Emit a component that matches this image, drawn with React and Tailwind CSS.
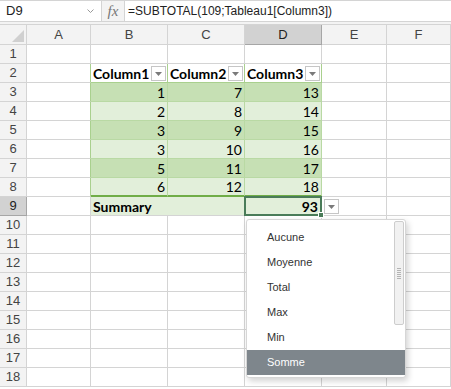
import React from "react";

const data = [
	[1, 7, 13],
	[2, 8, 14],
	[3, 9, 15],
	[3, 10, 16],
	[5, 11, 17],
	[6, 12, 18],
];

const menuItems = ["Aucune", "Moyenne", "Total", "Max", "Min", "Somme"];

const cellFont = "font-['Lato',sans-serif] text-[14px] text-black";
const uiFont = "font-['Liberation_Sans',Arial,sans-serif]";

const FilterButton = ({ className }) => (
	<div
		className={`absolute w-[15px] h-[15px] bg-white border border-[#c6c6c6] flex items-center justify-center ${className}`}
	>
		<svg width="7" height="4" viewBox="0 0 7 4">
			<path d="M0 0 H7 L3.5 4 Z" fill="#7a7a7a" />
		</svg>
	</div>
);

const RowHeader = ({ n }) => (
	<div
		className={`w-[27px] shrink-0 flex items-center justify-center border-r border-b text-[13px] ${uiFont} ${
			n === 9
				? "bg-[#d2d2d2] border-[#a6a6a6] text-[#222]"
				: "bg-[#f3f3f3] border-[#d4d4d4] text-[#444]"
		}`}
	>
		{n}
	</div>
);

const Plain = ({ w, green }) => (
	<div
		className={`${w} shrink-0 border-b border-[#d4d4d4] border-r ${
			green ? "border-r-[#a9d08e]" : ""
		}`}
	/>
);

const EmptyRow = ({ n }) => (
	<div className="flex h-[19px]">
		<RowHeader n={n} />
		<Plain w="w-[64px]" />
		<Plain w="w-[77px]" />
		<Plain w="w-[77px]" />
		<Plain w="w-[77px]" />
		<Plain w="w-[65px]" />
		<Plain w="w-[64px]" />
	</div>
);

const HeaderRow = () => (
	<div className="flex h-[19px]">
		<RowHeader n={2} />
		<Plain w="w-[64px]" green />
		{["Column1", "Column2", "Column3"].map((c) => (
			<div
				key={c}
				className={`relative w-[77px] shrink-0 border-r border-b border-[#a9d08e] bg-white flex items-end pl-[2px] font-bold ${cellFont} leading-[17px]`}
			>
				{c}
				<FilterButton className="right-[1px] top-[2px]" />
			</div>
		))}
		<Plain w="w-[65px]" />
		<Plain w="w-[64px]" />
	</div>
);

const DataRow = ({ n, values }) => {
	const dark = n % 2 === 1;
	const last = n === 8;
	return (
		<div className="flex h-[19px]">
			<RowHeader n={n} />
			<Plain w="w-[64px]" green />
			{values.map((v, i) => (
				<div
					key={i}
					className={`w-[77px] shrink-0 border-r border-b flex items-end justify-end pr-[2px] ${cellFont} leading-[17px] ${
						dark ? "bg-[#c6e0b4]" : "bg-[#e2efda]"
					} ${
						last
							? "border-r-[#b9d9a4] border-b-2 border-b-[#70ad47]"
							: "border-[#b9d9a4]"
					}`}
				>
					{v}
				</div>
			))}
			<div className="w-[65px] shrink-0 border-b border-r border-[#d4d4d4]" />
			<Plain w="w-[64px]" />
		</div>
	);
};

const SummaryRow = () => (
	<div className="flex h-[19px]">
		<RowHeader n={9} />
		<Plain w="w-[64px]" />
		<div
			className={`w-[77px] shrink-0 border-b border-[#d4d4d4] bg-[#e2efda] flex items-end pl-[2px] font-bold ${cellFont} leading-[17px]`}
		>
			Summary
		</div>
		<div className="w-[77px] shrink-0 border-b border-[#d4d4d4] bg-[#e2efda]" />
		<div
			className={`relative w-[77px] shrink-0 border-b border-r border-[#d4d4d4] bg-[#e2efda] flex items-end justify-end pr-[3px] font-bold ${cellFont} leading-[17px]`}
		>
			93
			<div className="absolute -left-[1px] -top-[1px] -right-[1px] -bottom-[1px] border-2 border-[#4a7c59]" />
			<div className="absolute -right-[3px] -bottom-[3px] w-[6px] h-[6px] bg-[#4a7c59] border border-white" />
			<FilterButton className="left-[79px] top-[2px]" />
		</div>
		<Plain w="w-[65px]" />
		<Plain w="w-[64px]" />
	</div>
);

const Menu = () => (
	<div className="absolute left-[246px] top-[219px] w-[160px] h-[159px] bg-white border border-[#d6d6d6] rounded-[3px] shadow-[2px_3px_6px_rgba(0,0,0,0.18)] pt-[5px]">
		{menuItems.map((m) => (
			<div
				key={m}
				className={`h-[25px] flex items-center pl-[20px] text-[11px] ${uiFont} ${
					m === "Somme" ? "bg-[#7e868c] text-white" : "text-[#333]"
				}`}
			>
				{m}
			</div>
		))}
		<div className="absolute right-[1px] top-[1px] w-[10px] h-[104px] bg-[#f1f1f1] border border-[#cdcdcd] rounded-[2px] flex flex-col items-center justify-center gap-[1px]">
			{[0, 1, 2, 3, 4, 5].map((i) => (
				<div key={i} className="w-[4px] h-[1px] bg-[#b4b4b4]" />
			))}
		</div>
	</div>
);

export default function App() {
	return (
		<div className="relative w-[451px] h-[389px] overflow-hidden bg-white">
			<div className={`flex h-[22px] border-y border-[#d4d4d4] ${uiFont}`}>
				<div className="w-[102px] shrink-0 border-r border-[#d4d4d4] flex items-center justify-between pl-[6px] pr-[7px] text-[#222] text-[13px]">
					<span>D9</span>
					<svg width="7" height="4" viewBox="0 0 7 4">
						<path d="M0.5 0.5 L3.5 3.5 L6.5 0.5" fill="none" stroke="#999" strokeWidth="1" />
					</svg>
				</div>
				<div className="w-[23px] shrink-0 border-r border-[#d4d4d4] bg-[#f3f3f3] flex items-center justify-center font-['Liberation_Serif',serif] italic text-[15px] text-[#777]">
					fx
				</div>
				<div className="pl-[3px] flex items-center text-[12px] text-[#222]">
					=SUBTOTAL(109;Tableau1[Column3])
				</div>
			</div>
			<div className="h-[3px] bg-[#f3f3f3] border-b border-[#d4d4d4]" />
			<div className={`flex h-[20px] text-[13px] text-[#444] ${uiFont}`}>
				<div className="relative w-[27px] shrink-0 bg-[#f3f3f3] border-r border-b border-[#d4d4d4]">
					<svg className="absolute right-[2px] bottom-[2px]" width="12" height="12" viewBox="0 0 12 12">
						<path d="M12 0 V12 H0 Z" fill="#d0d0d0" />
					</svg>
				</div>
				{["A", "B", "C"].map((c, i) => (
					<div
						key={c}
						className={`${i === 0 ? "w-[64px]" : "w-[77px]"} shrink-0 bg-[#f3f3f3] border-r border-b border-[#d4d4d4] flex items-center justify-center`}
					>
						{c}
					</div>
				))}
				<div className="w-[77px] shrink-0 bg-[#d2d2d2] border-r border-b border-[#a6a6a6] flex items-center justify-center text-[#222]">
					D
				</div>
				<div className="w-[65px] shrink-0 bg-[#f3f3f3] border-r border-b border-[#d4d4d4] flex items-center justify-center">
					E
				</div>
				<div className="w-[64px] shrink-0 bg-[#f3f3f3] border-r border-b border-[#d4d4d4] flex items-center justify-center">
					F
				</div>
			</div>
			<EmptyRow n={1} />
			<HeaderRow />
			{data.map((values, i) => (
				<DataRow key={i} n={i + 3} values={values} />
			))}
			<SummaryRow />
			{[10, 11, 12, 13, 14, 15, 16, 17, 18].map((n) => (
				<EmptyRow key={n} n={n} />
			))}
			<Menu />
		</div>
	);
}
